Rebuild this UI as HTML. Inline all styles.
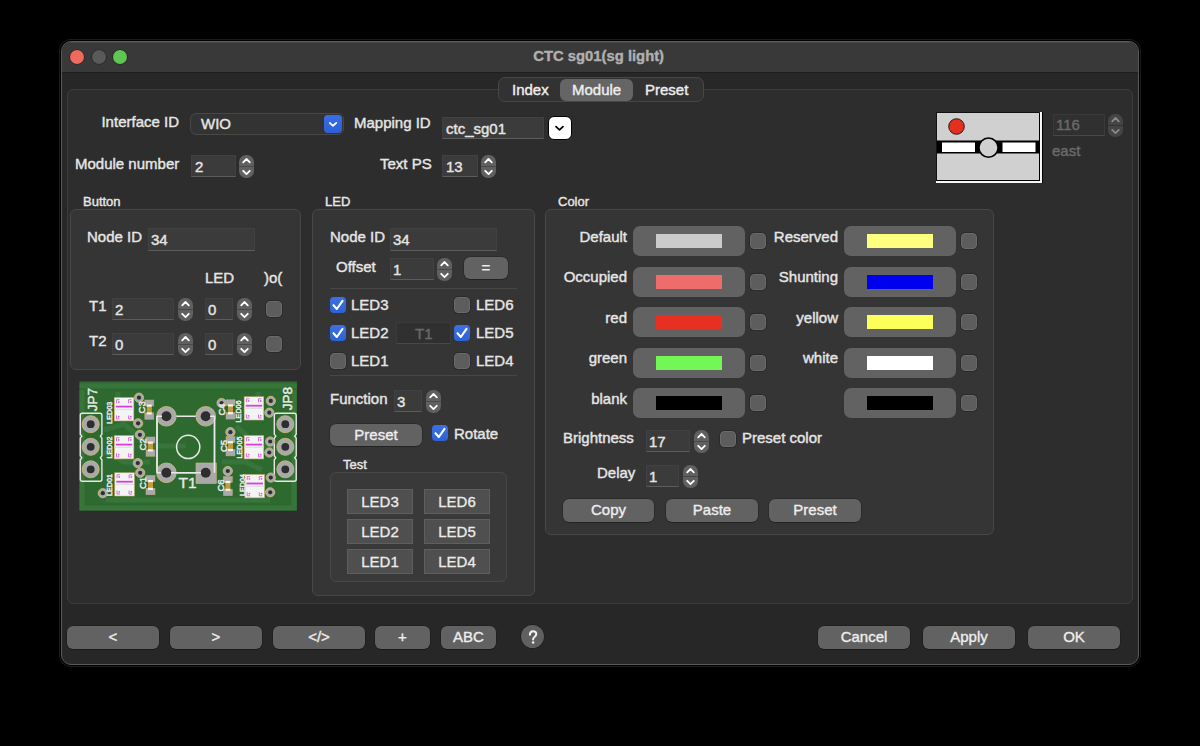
<!DOCTYPE html><html><head><meta charset="utf-8"><style>*{box-sizing:border-box;margin:0;padding:0}
html,body{width:1200px;height:746px;background:#000;overflow:hidden;font-family:"Liberation Sans",sans-serif;color:#e6e6e6;font-size:15px}
.a{position:absolute}
#win{position:absolute;left:61px;top:41px;width:1078px;height:624px;border-radius:10px;background:#272727;border:1px solid #5a5a5a;box-shadow:0 0 0 1px #000,0 0 0 2px #1c1c1c;overflow:hidden}
#tb{position:absolute;left:0;top:0;width:100%;height:31px;background:#393939;border-bottom:1px solid #1e1e1e;box-shadow:inset 0 1px 0 rgba(255,255,255,.07)}
.tl{position:absolute;top:8px;width:14px;height:14px;border-radius:50%;box-shadow:0 0 0 .6px rgba(0,0,0,.45)}
.t{position:absolute;white-space:nowrap;line-height:1;-webkit-text-stroke:0.4px currentColor}
.r{text-align:right}
.c{text-align:center}
.tab{position:absolute;left:67px;top:89px;width:1066px;height:515px;background:#2d2d2d;border:1px solid #3d3d3d;border-radius:6px}
.seg{background:#323232;border:1px solid #474747;border-radius:7px}
.box{position:absolute;background:#353535;border:1px solid #474747;border-radius:6px}
.tbox{background:#393939}
.fld{position:absolute;background:#3b3b3b;border:1px solid #414141;border-bottom:1.5px solid #5c5c5c}
.fld.dis{background:#303030;border:1px solid #3a3a3a;border-bottom:1px solid #484848}
.stp{position:absolute;width:15px;height:23px;background:#606060;border-radius:7px;overflow:hidden}
.stp svg{position:absolute;left:0;top:0}
.stp.dis{background:#454545}
.btn{position:absolute;background:#626262;border-radius:6px;color:#eeeeee;text-align:center;box-shadow:0 0 0 .5px rgba(0,0,0,.35),0 1px 0 rgba(0,0,0,.2);-webkit-text-stroke:0.35px currentColor}
.cb{position:absolute;width:16px;height:16px;border-radius:4px;background:#5d5d5d;border:1px solid #6a6a6a;box-shadow:0 0 0 .5px rgba(0,0,0,.4)}
.cbc{position:absolute;width:16px;height:16px;border-radius:4px;background:linear-gradient(#3c70e4,#2e61d4)}
.cbc svg{position:absolute;left:0;top:0}
.tbtn{position:absolute;background:#4f4f4f;border:1px solid #5e5e5e;color:#ececec;text-align:center;-webkit-text-stroke:0.3px currentColor}
.cbtn{position:absolute;width:112px;height:30px;background:#626262;border-radius:7px}
.sw{position:absolute;left:23px;top:8px;width:66px;height:14px}
.sep{position:absolute;height:1px;background:#474747}
.popup{background:#333;border:1px solid #474747;border-radius:6px}
.blue{background:linear-gradient(#3a6ee6,#2d5fd6);border-radius:4px}
.blue svg{position:absolute;left:0;top:0}
.help{border-radius:50%;background:#606060;box-shadow:0 0 0 .5px rgba(0,0,0,.4)}
</style></head><body>
<div id="win"><div id="tb"><div class="tl" style="left:8px;background:#ed6a5e;"></div><div class="tl" style="left:29.5px;background:#5a5a5a;"></div><div class="tl" style="left:51px;background:#61c554;"></div></div></div>
<div class="t c" style="left:448.70000000000005px;width:300px;top:49px;font-weight:bold;color:#b0b0b0;font-size:14.8px">CTC sg01(sg light)</div>
<div class="tab"></div>
<div class="a seg" style="left:498px;top:77px;width:206px;height:25px"></div>
<div class="a" style="left:560px;top:79px;width:73px;height:22px;background:#656565;border-radius:6px"></div>
<div class="t" style="left:512px;top:82px;color:#eee">Index</div>
<div class="t" style="left:572px;top:82px;color:#eee">Module</div>
<div class="t" style="left:645px;top:82px;color:#eee">Preset</div>
<div class="t r" style="left:-121px;width:300px;top:114px;">Interface ID</div>
<div class="a popup" style="left:190px;top:113px;width:154px;height:22px"></div>
<div class="a blue" style="left:324px;top:115px;width:18px;height:18px"><svg width="18" height="18" viewBox="0 0 18 18"><polyline points="5.8,7.9 9,10.8 12.2,7.9" fill="none" stroke="#fff" stroke-width="1.8" stroke-linecap="round" stroke-linejoin="round"/></svg></div>
<div class="t" style="left:201px;top:116px;">WIO</div>
<div class="t" style="left:354px;top:115px;">Mapping ID</div>
<div class="fld" style="left:442px;top:117px;width:102px;height:22px"></div>
<div class="t" style="left:446px;top:121px;">ctc_sg01</div>
<div class="a" style="left:548px;top:116px;width:24px;height:24px;background:#fff;border:1.5px solid #000;border-radius:6px"><svg width="21" height="21" viewBox="0 0 21 21" style="position:absolute;left:0;top:0"><polyline points="7,9.6 10.5,12.8 14,9.6" fill="none" stroke="#000" stroke-width="1.7" stroke-linecap="round" stroke-linejoin="round"/></svg></div>
<div class="t" style="left:75px;top:156px;">Module number</div>
<div class="fld" style="left:191px;top:155px;width:45px;height:22px"></div>
<div class="t" style="left:195px;top:159px;">2</div>
<div class="stp" style="left:239px;top:155px"><svg width="15" height="23" viewBox="0 0 15 23"><line x1="0" y1="11.5" x2="15" y2="11.5" stroke="rgba(0,0,0,.25)" stroke-width="1"/><polyline points="4.2,7.3 7.5,4 10.8,7.3" fill="none" stroke="#fff" stroke-width="1.8" stroke-linecap="round" stroke-linejoin="round"/><polyline points="4.2,15.8 7.5,19.1 10.8,15.8" fill="none" stroke="#fff" stroke-width="1.8" stroke-linecap="round" stroke-linejoin="round"/></svg></div>
<div class="t" style="left:380px;top:156px;">Text PS</div>
<div class="fld" style="left:442px;top:155px;width:36px;height:22px"></div>
<div class="t" style="left:446px;top:159px;">13</div>
<div class="stp" style="left:481px;top:155px"><svg width="15" height="23" viewBox="0 0 15 23"><line x1="0" y1="11.5" x2="15" y2="11.5" stroke="rgba(0,0,0,.25)" stroke-width="1"/><polyline points="4.2,7.3 7.5,4 10.8,7.3" fill="none" stroke="#fff" stroke-width="1.8" stroke-linecap="round" stroke-linejoin="round"/><polyline points="4.2,15.8 7.5,19.1 10.8,15.8" fill="none" stroke="#fff" stroke-width="1.8" stroke-linecap="round" stroke-linejoin="round"/></svg></div>
<div class="a" style="left:936px;top:112px;width:103px;height:69px;background:#d0d0d0;border-top:1px solid #111;border-left:1px solid #111;overflow:hidden"><svg width="103" height="68" viewBox="0 0 103 68" style="position:absolute;left:0;top:0"><rect x="0" y="27.5" width="103" height="13" fill="#000"/><rect x="5" y="29.5" width="33" height="9.5" fill="#fff"/><rect x="65.5" y="29.5" width="33" height="9.5" fill="#fff"/><circle cx="51.5" cy="34.6" r="9.6" fill="#d0d0d0" stroke="#000" stroke-width="1.6"/><circle cx="19.5" cy="13.5" r="7.8" fill="#e5301f" stroke="#000" stroke-width="0.8"/></svg></div>
<div class="a" style="left:1039px;top:113px;width:1px;height:68px;background:#000"></div>
<div class="a" style="left:937px;top:180px;width:103px;height:1px;background:#000"></div>
<div class="a" style="left:1040px;top:112px;width:2px;height:71px;background:#f6f6f6"></div>
<div class="a" style="left:936px;top:181px;width:106px;height:2px;background:#f6f6f6"></div>
<div class="a" style="left:1042px;top:112px;width:1px;height:71px;background:#000"></div>
<div class="fld dis" style="left:1053px;top:114px;width:52px;height:22px"></div>
<div class="t" style="left:1056px;top:116.5px;color:#6a6a6a">116</div>
<div class="stp dis" style="left:1108px;top:114px"><svg width="15" height="23" viewBox="0 0 15 23"><line x1="0" y1="11.5" x2="15" y2="11.5" stroke="rgba(0,0,0,.25)" stroke-width="1"/><polyline points="4.2,7.3 7.5,4 10.8,7.3" fill="none" stroke="#8a8a8a" stroke-width="1.8" stroke-linecap="round" stroke-linejoin="round"/><polyline points="4.2,15.8 7.5,19.1 10.8,15.8" fill="none" stroke="#8a8a8a" stroke-width="1.8" stroke-linecap="round" stroke-linejoin="round"/></svg></div>
<div class="t" style="left:1052px;top:143px;color:#6a6a6a">east</div>
<div class="t" style="left:83px;top:195px;font-size:13px;-webkit-text-stroke:0.4px currentColor">Button</div>
<div class="box" style="left:70px;top:209px;width:231px;height:161px"></div>
<div class="t" style="left:87px;top:229px;">Node ID</div>
<div class="fld" style="left:148px;top:228px;width:107px;height:23px"></div>
<div class="t" style="left:151px;top:232px;">34</div>
<div class="t" style="left:205px;top:270px;">LED</div>
<div class="t" style="left:264px;top:270px;">)o(</div>
<div class="t" style="left:89px;top:298px;">T1</div>
<div class="fld" style="left:112px;top:298px;width:62px;height:22px"></div>
<div class="t" style="left:115px;top:302px;">2</div>
<div class="stp" style="left:178px;top:298px"><svg width="15" height="23" viewBox="0 0 15 23"><line x1="0" y1="11.5" x2="15" y2="11.5" stroke="rgba(0,0,0,.25)" stroke-width="1"/><polyline points="4.2,7.3 7.5,4 10.8,7.3" fill="none" stroke="#fff" stroke-width="1.8" stroke-linecap="round" stroke-linejoin="round"/><polyline points="4.2,15.8 7.5,19.1 10.8,15.8" fill="none" stroke="#fff" stroke-width="1.8" stroke-linecap="round" stroke-linejoin="round"/></svg></div>
<div class="fld" style="left:205px;top:298px;width:28px;height:22px"></div>
<div class="t" style="left:208px;top:302px;">0</div>
<div class="stp" style="left:237px;top:298px"><svg width="15" height="23" viewBox="0 0 15 23"><line x1="0" y1="11.5" x2="15" y2="11.5" stroke="rgba(0,0,0,.25)" stroke-width="1"/><polyline points="4.2,7.3 7.5,4 10.8,7.3" fill="none" stroke="#fff" stroke-width="1.8" stroke-linecap="round" stroke-linejoin="round"/><polyline points="4.2,15.8 7.5,19.1 10.8,15.8" fill="none" stroke="#fff" stroke-width="1.8" stroke-linecap="round" stroke-linejoin="round"/></svg></div>
<div class="cb" style="left:266px;top:301px"></div>
<div class="t" style="left:89px;top:333px;">T2</div>
<div class="fld" style="left:112px;top:333px;width:62px;height:22px"></div>
<div class="t" style="left:115px;top:337px;">0</div>
<div class="stp" style="left:178px;top:333px"><svg width="15" height="23" viewBox="0 0 15 23"><line x1="0" y1="11.5" x2="15" y2="11.5" stroke="rgba(0,0,0,.25)" stroke-width="1"/><polyline points="4.2,7.3 7.5,4 10.8,7.3" fill="none" stroke="#fff" stroke-width="1.8" stroke-linecap="round" stroke-linejoin="round"/><polyline points="4.2,15.8 7.5,19.1 10.8,15.8" fill="none" stroke="#fff" stroke-width="1.8" stroke-linecap="round" stroke-linejoin="round"/></svg></div>
<div class="fld" style="left:205px;top:333px;width:28px;height:22px"></div>
<div class="t" style="left:208px;top:337px;">0</div>
<div class="stp" style="left:237px;top:333px"><svg width="15" height="23" viewBox="0 0 15 23"><line x1="0" y1="11.5" x2="15" y2="11.5" stroke="rgba(0,0,0,.25)" stroke-width="1"/><polyline points="4.2,7.3 7.5,4 10.8,7.3" fill="none" stroke="#fff" stroke-width="1.8" stroke-linecap="round" stroke-linejoin="round"/><polyline points="4.2,15.8 7.5,19.1 10.8,15.8" fill="none" stroke="#fff" stroke-width="1.8" stroke-linecap="round" stroke-linejoin="round"/></svg></div>
<div class="cb" style="left:266px;top:336px"></div>
<svg class="a" style="left:79px;top:381px" width="219" height="131" viewBox="79 381 219 131">
<rect x="79.5" y="381.5" width="217.5" height="129" fill="#2e6a2f"/>
<g fill="none" stroke="#37753a" stroke-width="5">
<path d="M79.5,386 H297"/>
<path d="M82,390 V508 H294 V390"/>
<path d="M118,392 V398 M258,392 V398"/>
<path d="M104,430 L124,424 L150,446 L186,446"/>
<path d="M104,452 L124,462 L150,462"/>
<path d="M236,426 L258,446 L274,446"/>
<path d="M222,462 L246,462 L262,470"/>
<path d="M106,500 H270"/>
</g>
<g fill="none" stroke="#2b642a" stroke-width="2.5">
<path d="M150,398 V418 M230,398 V418"/>
</g>
<path d="M82.3,413.2 H99.9 Q101.9,413.2 101.9,415.2 V434.2 L100.4,436.2 L101.9,438.2 V455.8 L100.4,457.8 L101.9,459.8 V479.2 Q101.9,481.2 99.9,481.2 H82.3 Q80.3,481.2 80.3,479.2 V459.8 L81.8,457.8 L80.3,455.8 V438.2 L81.8,436.2 L80.3,434.2 V415.2 Q80.3,413.2 82.3,413.2 Z" fill="none" stroke="#e8e8e8" stroke-width="1.4"/>
<path d="M276.3,413.2 H294.2 Q296.2,413.2 296.2,415.2 V434.2 L294.7,436.2 L296.2,438.2 V455.8 L294.7,457.8 L296.2,459.8 V479.2 Q296.2,481.2 294.2,481.2 H276.3 Q274.3,481.2 274.3,479.2 V459.8 L275.8,457.8 L274.3,455.8 V438.2 L275.8,436.2 L274.3,434.2 V415.2 Q274.3,413.2 276.3,413.2 Z" fill="none" stroke="#e8e8e8" stroke-width="1.4"/>
<circle cx="90.7" cy="424.2" r="8.5" fill="#a9a9a9" stroke="#c9b978" stroke-width="0.9"/>
<circle cx="90.7" cy="424.2" r="3.9" fill="#2e2e2e"/>
<circle cx="285.3" cy="424.2" r="8.5" fill="#a9a9a9" stroke="#c9b978" stroke-width="0.9"/>
<circle cx="285.3" cy="424.2" r="3.9" fill="#2e2e2e"/>
<circle cx="90.7" cy="446.8" r="8.5" fill="#a9a9a9" stroke="#c9b978" stroke-width="0.9"/>
<circle cx="90.7" cy="446.8" r="3.9" fill="#2e2e2e"/>
<circle cx="285.3" cy="446.8" r="8.5" fill="#a9a9a9" stroke="#c9b978" stroke-width="0.9"/>
<circle cx="285.3" cy="446.8" r="3.9" fill="#2e2e2e"/>
<circle cx="90.7" cy="469.3" r="8.5" fill="#a9a9a9" stroke="#c9b978" stroke-width="0.9"/>
<circle cx="90.7" cy="469.3" r="3.9" fill="#2e2e2e"/>
<circle cx="285.3" cy="469.3" r="8.5" fill="#a9a9a9" stroke="#c9b978" stroke-width="0.9"/>
<circle cx="285.3" cy="469.3" r="3.9" fill="#2e2e2e"/>
<circle cx="139" cy="397.7" r="4.6" fill="#a9a9a9" stroke="#c9b978" stroke-width="0.9"/>
<circle cx="139" cy="397.7" r="2.1" fill="#2e2e2e"/>
<circle cx="138.1" cy="423.3" r="4.6" fill="#a9a9a9" stroke="#c9b978" stroke-width="0.9"/>
<circle cx="138.1" cy="423.3" r="2.1" fill="#2e2e2e"/>
<circle cx="139.9" cy="434.8" r="4.6" fill="#a9a9a9" stroke="#c9b978" stroke-width="0.9"/>
<circle cx="139.9" cy="434.8" r="2.1" fill="#2e2e2e"/>
<circle cx="137.8" cy="463.1" r="4.6" fill="#a9a9a9" stroke="#c9b978" stroke-width="0.9"/>
<circle cx="137.8" cy="463.1" r="2.1" fill="#2e2e2e"/>
<circle cx="140.2" cy="472.8" r="4.6" fill="#a9a9a9" stroke="#c9b978" stroke-width="0.9"/>
<circle cx="140.2" cy="472.8" r="2.1" fill="#2e2e2e"/>
<circle cx="102.8" cy="493.2" r="4.6" fill="#a9a9a9" stroke="#c9b978" stroke-width="0.9"/>
<circle cx="102.8" cy="493.2" r="2.1" fill="#2e2e2e"/>
<circle cx="221.6" cy="403" r="4.6" fill="#a9a9a9" stroke="#c9b978" stroke-width="0.9"/>
<circle cx="221.6" cy="403" r="2.1" fill="#2e2e2e"/>
<circle cx="270.8" cy="400.9" r="4.6" fill="#a9a9a9" stroke="#c9b978" stroke-width="0.9"/>
<circle cx="270.8" cy="400.9" r="2.1" fill="#2e2e2e"/>
<circle cx="269.3" cy="412.7" r="4.6" fill="#a9a9a9" stroke="#c9b978" stroke-width="0.9"/>
<circle cx="269.3" cy="412.7" r="2.1" fill="#2e2e2e"/>
<circle cx="230.4" cy="432.2" r="4.6" fill="#a9a9a9" stroke="#c9b978" stroke-width="0.9"/>
<circle cx="230.4" cy="432.2" r="2.1" fill="#2e2e2e"/>
<circle cx="270.2" cy="441.5" r="4.6" fill="#a9a9a9" stroke="#c9b978" stroke-width="0.9"/>
<circle cx="270.2" cy="441.5" r="2.1" fill="#2e2e2e"/>
<circle cx="269.3" cy="452.5" r="4.6" fill="#a9a9a9" stroke="#c9b978" stroke-width="0.9"/>
<circle cx="269.3" cy="452.5" r="2.1" fill="#2e2e2e"/>
<circle cx="227.8" cy="471" r="4.6" fill="#a9a9a9" stroke="#c9b978" stroke-width="0.9"/>
<circle cx="227.8" cy="471" r="2.1" fill="#2e2e2e"/>
<circle cx="270.8" cy="477.6" r="4.6" fill="#a9a9a9" stroke="#c9b978" stroke-width="0.9"/>
<circle cx="270.8" cy="477.6" r="2.1" fill="#2e2e2e"/>
<circle cx="270.2" cy="492.3" r="4.6" fill="#a9a9a9" stroke="#c9b978" stroke-width="0.9"/>
<circle cx="270.2" cy="492.3" r="2.1" fill="#2e2e2e"/>
<rect x="114.3" y="397.7" width="19.5" height="23.2" fill="#f4f4f4" stroke="#c9b978" stroke-width="0.6"/>
<rect x="115.8" y="405.7" width="16.5" height="1.8" fill="#d83ee0"/>
<path d="M116.5,403.2 V399.7 H119.5" fill="none" stroke="#d85ee0" stroke-width="0.9"/>
<path d="M116.5,415.4 V418.9 H119.5" fill="none" stroke="#d85ee0" stroke-width="0.9"/>
<circle cx="118.7" cy="401.9" r="0.9" fill="#d85ee0"/>
<circle cx="118.7" cy="416.7" r="0.9" fill="#d85ee0"/>
<path d="M128.6,403.2 V399.7 H131.6" fill="none" stroke="#d85ee0" stroke-width="0.9"/>
<path d="M128.6,415.4 V418.9 H131.6" fill="none" stroke="#d85ee0" stroke-width="0.9"/>
<circle cx="130.79999999999998" cy="401.9" r="0.9" fill="#d85ee0"/>
<circle cx="130.79999999999998" cy="416.7" r="0.9" fill="#d85ee0"/>
<rect x="114.3" y="408.8" width="19.5" height="1" fill="#dddddd"/>
<rect x="114.3" y="435.7" width="19.5" height="23.2" fill="#f4f4f4" stroke="#c9b978" stroke-width="0.6"/>
<rect x="115.8" y="443.7" width="16.5" height="1.8" fill="#d83ee0"/>
<path d="M116.5,441.2 V437.7 H119.5" fill="none" stroke="#d85ee0" stroke-width="0.9"/>
<path d="M116.5,453.4 V456.9 H119.5" fill="none" stroke="#d85ee0" stroke-width="0.9"/>
<circle cx="118.7" cy="439.9" r="0.9" fill="#d85ee0"/>
<circle cx="118.7" cy="454.7" r="0.9" fill="#d85ee0"/>
<path d="M128.6,441.2 V437.7 H131.6" fill="none" stroke="#d85ee0" stroke-width="0.9"/>
<path d="M128.6,453.4 V456.9 H131.6" fill="none" stroke="#d85ee0" stroke-width="0.9"/>
<circle cx="130.79999999999998" cy="439.9" r="0.9" fill="#d85ee0"/>
<circle cx="130.79999999999998" cy="454.7" r="0.9" fill="#d85ee0"/>
<rect x="114.3" y="446.8" width="19.5" height="1" fill="#dddddd"/>
<rect x="114.8" y="472.8" width="19.5" height="23.2" fill="#f4f4f4" stroke="#c9b978" stroke-width="0.6"/>
<rect x="116.3" y="480.8" width="16.5" height="1.8" fill="#d83ee0"/>
<path d="M117.0,478.3 V474.8 H120.0" fill="none" stroke="#d85ee0" stroke-width="0.9"/>
<path d="M117.0,490.5 V494.0 H120.0" fill="none" stroke="#d85ee0" stroke-width="0.9"/>
<circle cx="119.2" cy="477.0" r="0.9" fill="#d85ee0"/>
<circle cx="119.2" cy="491.8" r="0.9" fill="#d85ee0"/>
<path d="M129.1,478.3 V474.8 H132.1" fill="none" stroke="#d85ee0" stroke-width="0.9"/>
<path d="M129.1,490.5 V494.0 H132.1" fill="none" stroke="#d85ee0" stroke-width="0.9"/>
<circle cx="131.29999999999998" cy="477.0" r="0.9" fill="#d85ee0"/>
<circle cx="131.29999999999998" cy="491.8" r="0.9" fill="#d85ee0"/>
<rect x="114.8" y="483.90000000000003" width="19.5" height="1" fill="#dddddd"/>
<rect x="244.2" y="396.8" width="19.5" height="23.2" fill="#f4f4f4" stroke="#c9b978" stroke-width="0.6"/>
<rect x="245.7" y="404.8" width="16.5" height="1.8" fill="#d83ee0"/>
<path d="M246.39999999999998,402.3 V398.8 H249.39999999999998" fill="none" stroke="#d85ee0" stroke-width="0.9"/>
<path d="M246.39999999999998,414.5 V418.0 H249.39999999999998" fill="none" stroke="#d85ee0" stroke-width="0.9"/>
<circle cx="248.59999999999997" cy="401.0" r="0.9" fill="#d85ee0"/>
<circle cx="248.59999999999997" cy="415.8" r="0.9" fill="#d85ee0"/>
<path d="M258.5,402.3 V398.8 H261.5" fill="none" stroke="#d85ee0" stroke-width="0.9"/>
<path d="M258.5,414.5 V418.0 H261.5" fill="none" stroke="#d85ee0" stroke-width="0.9"/>
<circle cx="260.7" cy="401.0" r="0.9" fill="#d85ee0"/>
<circle cx="260.7" cy="415.8" r="0.9" fill="#d85ee0"/>
<rect x="244.2" y="407.90000000000003" width="19.5" height="1" fill="#dddddd"/>
<rect x="244.2" y="435.7" width="19.5" height="23.2" fill="#f4f4f4" stroke="#c9b978" stroke-width="0.6"/>
<rect x="245.7" y="443.7" width="16.5" height="1.8" fill="#d83ee0"/>
<path d="M246.39999999999998,441.2 V437.7 H249.39999999999998" fill="none" stroke="#d85ee0" stroke-width="0.9"/>
<path d="M246.39999999999998,453.4 V456.9 H249.39999999999998" fill="none" stroke="#d85ee0" stroke-width="0.9"/>
<circle cx="248.59999999999997" cy="439.9" r="0.9" fill="#d85ee0"/>
<circle cx="248.59999999999997" cy="454.7" r="0.9" fill="#d85ee0"/>
<path d="M258.5,441.2 V437.7 H261.5" fill="none" stroke="#d85ee0" stroke-width="0.9"/>
<path d="M258.5,453.4 V456.9 H261.5" fill="none" stroke="#d85ee0" stroke-width="0.9"/>
<circle cx="260.7" cy="439.9" r="0.9" fill="#d85ee0"/>
<circle cx="260.7" cy="454.7" r="0.9" fill="#d85ee0"/>
<rect x="244.2" y="446.8" width="19.5" height="1" fill="#dddddd"/>
<rect x="245" y="474.6" width="19.5" height="23.2" fill="#f4f4f4" stroke="#c9b978" stroke-width="0.6"/>
<rect x="246.5" y="482.6" width="16.5" height="1.8" fill="#d83ee0"/>
<path d="M247.2,480.1 V476.6 H250.2" fill="none" stroke="#d85ee0" stroke-width="0.9"/>
<path d="M247.2,492.3 V495.8 H250.2" fill="none" stroke="#d85ee0" stroke-width="0.9"/>
<circle cx="249.39999999999998" cy="478.8" r="0.9" fill="#d85ee0"/>
<circle cx="249.39999999999998" cy="493.6" r="0.9" fill="#d85ee0"/>
<path d="M259.3,480.1 V476.6 H262.3" fill="none" stroke="#d85ee0" stroke-width="0.9"/>
<path d="M259.3,492.3 V495.8 H262.3" fill="none" stroke="#d85ee0" stroke-width="0.9"/>
<circle cx="261.5" cy="478.8" r="0.9" fill="#d85ee0"/>
<circle cx="261.5" cy="493.6" r="0.9" fill="#d85ee0"/>
<rect x="245" y="485.70000000000005" width="19.5" height="1" fill="#dddddd"/>
<rect x="144.8" y="400" width="9" height="6" fill="#a9a9a9" stroke="#b9ad7a" stroke-width="0.5"/>
<rect x="144.8" y="412.8" width="9" height="6.5" fill="#a9a9a9" stroke="#b9ad7a" stroke-width="0.5"/>
<rect x="146.8" y="405" width="5" height="9.3" fill="#c59a3a"/>
<rect x="146.8" y="404.5" width="5" height="2.2" fill="#f2f2f2"/>
<rect x="146.8" y="412.3" width="5" height="2.2" fill="#f2f2f2"/>
<rect x="146" y="437" width="9" height="6" fill="#a9a9a9" stroke="#b9ad7a" stroke-width="0.5"/>
<rect x="146" y="449.8" width="9" height="6.5" fill="#a9a9a9" stroke="#b9ad7a" stroke-width="0.5"/>
<rect x="148" y="442" width="5" height="9.3" fill="#c59a3a"/>
<rect x="148" y="441.5" width="5" height="2.2" fill="#f2f2f2"/>
<rect x="148" y="449.3" width="5" height="2.2" fill="#f2f2f2"/>
<rect x="146" y="475.5" width="9" height="6" fill="#a9a9a9" stroke="#b9ad7a" stroke-width="0.5"/>
<rect x="146" y="488.3" width="9" height="6.5" fill="#a9a9a9" stroke="#b9ad7a" stroke-width="0.5"/>
<rect x="148" y="480.5" width="5" height="9.3" fill="#c59a3a"/>
<rect x="148" y="480.0" width="5" height="2.2" fill="#f2f2f2"/>
<rect x="148" y="487.8" width="5" height="2.2" fill="#f2f2f2"/>
<rect x="226" y="399.8" width="9" height="6" fill="#a9a9a9" stroke="#b9ad7a" stroke-width="0.5"/>
<rect x="226" y="412.6" width="9" height="6.5" fill="#a9a9a9" stroke="#b9ad7a" stroke-width="0.5"/>
<rect x="228" y="404.8" width="5" height="9.3" fill="#c59a3a"/>
<rect x="228" y="404.3" width="5" height="2.2" fill="#f2f2f2"/>
<rect x="228" y="412.1" width="5" height="2.2" fill="#f2f2f2"/>
<rect x="226" y="436.6" width="9" height="6" fill="#a9a9a9" stroke="#b9ad7a" stroke-width="0.5"/>
<rect x="226" y="449.40000000000003" width="9" height="6.5" fill="#a9a9a9" stroke="#b9ad7a" stroke-width="0.5"/>
<rect x="228" y="441.6" width="5" height="9.3" fill="#c59a3a"/>
<rect x="228" y="441.1" width="5" height="2.2" fill="#f2f2f2"/>
<rect x="228" y="448.90000000000003" width="5" height="2.2" fill="#f2f2f2"/>
<rect x="223.4" y="476.4" width="9" height="6" fill="#a9a9a9" stroke="#b9ad7a" stroke-width="0.5"/>
<rect x="223.4" y="489.2" width="9" height="6.5" fill="#a9a9a9" stroke="#b9ad7a" stroke-width="0.5"/>
<rect x="225.4" y="481.4" width="5" height="9.3" fill="#c59a3a"/>
<rect x="225.4" y="480.9" width="5" height="2.2" fill="#f2f2f2"/>
<rect x="225.4" y="488.7" width="5" height="2.2" fill="#f2f2f2"/>
<path d="M157,416.3 V472.8 M166.4,416.3 H205.7 M214.5,416.3 V472.8 M166.4,472.8 H205.7" stroke="#e8e8e8" stroke-width="1.5" fill="none"/>
<path d="M157,416.3 H166 M206,416.3 H214.5 M157,472.8 H166 M206,472.8 H214.5" stroke="#e8e8e8" stroke-width="1.5" fill="none"/>
<circle cx="188.2" cy="446.9" r="11.6" fill="none" stroke="#e8e8e8" stroke-width="1.5"/>
<circle cx="166.4" cy="416.3" r="9.8" fill="#a9a9a9" stroke="#c9b978" stroke-width="0.9"/>
<circle cx="166.4" cy="416.3" r="5" fill="#2e2e2e"/>
<circle cx="205.7" cy="416.3" r="9.8" fill="#a9a9a9" stroke="#c9b978" stroke-width="0.9"/>
<circle cx="205.7" cy="416.3" r="5" fill="#2e2e2e"/>
<circle cx="166.4" cy="472.8" r="9.8" fill="#a9a9a9" stroke="#c9b978" stroke-width="0.9"/>
<circle cx="166.4" cy="472.8" r="5" fill="#2e2e2e"/>
<rect x="196" y="463" width="20.3" height="20.5" fill="#a9a9a9" stroke="#c9b978" stroke-width="0.6"/>
<circle cx="205.7" cy="472.8" r="5" fill="#2e2e2e"/>
<path d="M157,416.3 H162 M210,416.3 H214.5 M214.5,416.3 V472.8 M157,416.3 V472.8 M157,472.8 H161 M171,472.8 H201" stroke="#e8e8e8" stroke-width="1.5" fill="none"/>
<text x="92.6" y="399.5" transform="rotate(-90 92.6 399.5)" font-family="Liberation Sans" font-size="13.5" fill="#e8e8e8" stroke="#e8e8e8" stroke-width="0.45" text-anchor="middle" dominant-baseline="central" letter-spacing="0">JP7</text>
<text x="287.9" y="398.5" transform="rotate(-90 287.9 398.5)" font-family="Liberation Sans" font-size="13.5" fill="#e8e8e8" stroke="#e8e8e8" stroke-width="0.45" text-anchor="middle" dominant-baseline="central" letter-spacing="0">JP8</text>
<text x="109.4" y="412.7" transform="rotate(-90 109.4 412.7)" font-family="Liberation Sans" font-size="7.2" fill="#e8e8e8" stroke="#e8e8e8" stroke-width="0.45" text-anchor="middle" dominant-baseline="central" letter-spacing="0">LED03</text>
<text x="109.4" y="447.5" transform="rotate(-90 109.4 447.5)" font-family="Liberation Sans" font-size="7.2" fill="#e8e8e8" stroke="#e8e8e8" stroke-width="0.45" text-anchor="middle" dominant-baseline="central" letter-spacing="0">LED02</text>
<text x="109.4" y="485" transform="rotate(-90 109.4 485)" font-family="Liberation Sans" font-size="7.2" fill="#e8e8e8" stroke="#e8e8e8" stroke-width="0.45" text-anchor="middle" dominant-baseline="central" letter-spacing="0">LED01</text>
<text x="239" y="411.4" transform="rotate(-90 239 411.4)" font-family="Liberation Sans" font-size="7.2" fill="#e8e8e8" stroke="#e8e8e8" stroke-width="0.45" text-anchor="middle" dominant-baseline="central" letter-spacing="0">LED06</text>
<text x="239" y="447.5" transform="rotate(-90 239 447.5)" font-family="Liberation Sans" font-size="7.2" fill="#e8e8e8" stroke="#e8e8e8" stroke-width="0.45" text-anchor="middle" dominant-baseline="central" letter-spacing="0">LED05</text>
<text x="242" y="485" transform="rotate(-90 242 485)" font-family="Liberation Sans" font-size="7.2" fill="#e8e8e8" stroke="#e8e8e8" stroke-width="0.45" text-anchor="middle" dominant-baseline="central" letter-spacing="0">LED04</text>
<text x="142" y="407.4" transform="rotate(-90 142 407.4)" font-family="Liberation Sans" font-size="9.5" fill="#e8e8e8" stroke="#e8e8e8" stroke-width="0.45" text-anchor="middle" dominant-baseline="central" letter-spacing="0">C3</text>
<text x="142.5" y="444.5" transform="rotate(-90 142.5 444.5)" font-family="Liberation Sans" font-size="9.5" fill="#e8e8e8" stroke="#e8e8e8" stroke-width="0.45" text-anchor="middle" dominant-baseline="central" letter-spacing="0">C2</text>
<text x="142.5" y="483" transform="rotate(-90 142.5 483)" font-family="Liberation Sans" font-size="9.5" fill="#e8e8e8" stroke="#e8e8e8" stroke-width="0.45" text-anchor="middle" dominant-baseline="central" letter-spacing="0">C1</text>
<text x="221.6" y="409.5" transform="rotate(-90 221.6 409.5)" font-family="Liberation Sans" font-size="9.5" fill="#e8e8e8" stroke="#e8e8e8" stroke-width="0.45" text-anchor="middle" dominant-baseline="central" letter-spacing="0">C4</text>
<text x="223" y="446" transform="rotate(-90 223 446)" font-family="Liberation Sans" font-size="9.5" fill="#e8e8e8" stroke="#e8e8e8" stroke-width="0.45" text-anchor="middle" dominant-baseline="central" letter-spacing="0">C5</text>
<text x="220.3" y="485.5" transform="rotate(-90 220.3 485.5)" font-family="Liberation Sans" font-size="9.5" fill="#e8e8e8" stroke="#e8e8e8" stroke-width="0.45" text-anchor="middle" dominant-baseline="central" letter-spacing="0">C6</text>
<text x="187.5" y="482" font-family="Liberation Sans" font-size="15.5" fill="#e8e8e8" stroke="#e8e8e8" stroke-width="0.4" text-anchor="middle" dominant-baseline="central">T1</text>
</svg>
<div class="t" style="left:325px;top:195px;font-size:13px;-webkit-text-stroke:0.4px currentColor">LED</div>
<div class="box" style="left:312px;top:209px;width:223px;height:387px"></div>
<div class="t" style="left:330px;top:229px;">Node ID</div>
<div class="fld" style="left:390px;top:228px;width:107px;height:23px"></div>
<div class="t" style="left:393px;top:232px;">34</div>
<div class="t" style="left:336px;top:259px;">Offset</div>
<div class="fld" style="left:390px;top:258px;width:44px;height:22px"></div>
<div class="t" style="left:393px;top:262px;">1</div>
<div class="stp" style="left:437px;top:258px"><svg width="15" height="23" viewBox="0 0 15 23"><line x1="0" y1="11.5" x2="15" y2="11.5" stroke="rgba(0,0,0,.25)" stroke-width="1"/><polyline points="4.2,7.3 7.5,4 10.8,7.3" fill="none" stroke="#fff" stroke-width="1.8" stroke-linecap="round" stroke-linejoin="round"/><polyline points="4.2,15.8 7.5,19.1 10.8,15.8" fill="none" stroke="#fff" stroke-width="1.8" stroke-linecap="round" stroke-linejoin="round"/></svg></div>
<div class="btn" style="left:464px;top:257px;width:44px;height:22px;line-height:22px;">=</div>
<div class="sep" style="left:330px;top:288px;width:187px"></div>
<div class="cbc" style="left:330px;top:297px"><svg width="16" height="16" viewBox="0 0 16 16"><polyline points="3.5,8.2 6.8,12 12.5,3.8" fill="none" stroke="#fff" stroke-width="2.1" stroke-linecap="round" stroke-linejoin="round"/></svg></div>
<div class="t" style="left:351px;top:296.5px;">LED3</div>
<div class="cb" style="left:454px;top:297px"></div>
<div class="t" style="left:476px;top:296.5px;">LED6</div>
<div class="cbc" style="left:330px;top:325px"><svg width="16" height="16" viewBox="0 0 16 16"><polyline points="3.5,8.2 6.8,12 12.5,3.8" fill="none" stroke="#fff" stroke-width="2.1" stroke-linecap="round" stroke-linejoin="round"/></svg></div>
<div class="t" style="left:351px;top:324.5px;">LED2</div>
<div class="cbc" style="left:454px;top:325px"><svg width="16" height="16" viewBox="0 0 16 16"><polyline points="3.5,8.2 6.8,12 12.5,3.8" fill="none" stroke="#fff" stroke-width="2.1" stroke-linecap="round" stroke-linejoin="round"/></svg></div>
<div class="t" style="left:476px;top:324.5px;">LED5</div>
<div class="cb" style="left:330px;top:353px"></div>
<div class="t" style="left:351px;top:352.5px;">LED1</div>
<div class="cb" style="left:454px;top:353px"></div>
<div class="t" style="left:476px;top:352.5px;">LED4</div>
<div class="fld dis" style="left:396px;top:322px;width:55px;height:22px"></div>
<div class="t" style="left:415px;top:325.5px;color:#6a6a6a">T1</div>
<div class="sep" style="left:330px;top:375px;width:187px"></div>
<div class="t" style="left:330px;top:391px;">Function</div>
<div class="fld" style="left:394px;top:390px;width:28px;height:22px"></div>
<div class="t" style="left:397px;top:394px;">3</div>
<div class="stp" style="left:426px;top:390px"><svg width="15" height="23" viewBox="0 0 15 23"><line x1="0" y1="11.5" x2="15" y2="11.5" stroke="rgba(0,0,0,.25)" stroke-width="1"/><polyline points="4.2,7.3 7.5,4 10.8,7.3" fill="none" stroke="#fff" stroke-width="1.8" stroke-linecap="round" stroke-linejoin="round"/><polyline points="4.2,15.8 7.5,19.1 10.8,15.8" fill="none" stroke="#fff" stroke-width="1.8" stroke-linecap="round" stroke-linejoin="round"/></svg></div>
<div class="btn" style="left:330px;top:424px;width:92px;height:22px;line-height:22px;">Preset</div>
<div class="cbc" style="left:432px;top:425px"><svg width="16" height="16" viewBox="0 0 16 16"><polyline points="3.5,8.2 6.8,12 12.5,3.8" fill="none" stroke="#fff" stroke-width="2.1" stroke-linecap="round" stroke-linejoin="round"/></svg></div>
<div class="t" style="left:454px;top:426px;">Rotate</div>
<div class="t" style="left:343px;top:458px;font-size:13px;-webkit-text-stroke:0.4px currentColor">Test</div>
<div class="box tbox" style="left:330px;top:472px;width:177px;height:110px"></div>
<div class="tbtn" style="left:347px;top:489px;width:66px;height:25px;line-height:24px">LED3</div>
<div class="tbtn" style="left:424px;top:489px;width:66px;height:25px;line-height:24px">LED6</div>
<div class="tbtn" style="left:347px;top:519px;width:66px;height:25px;line-height:24px">LED2</div>
<div class="tbtn" style="left:424px;top:519px;width:66px;height:25px;line-height:24px">LED5</div>
<div class="tbtn" style="left:347px;top:549px;width:66px;height:25px;line-height:24px">LED1</div>
<div class="tbtn" style="left:424px;top:549px;width:66px;height:25px;line-height:24px">LED4</div>
<div class="t" style="left:558px;top:195px;font-size:13px;-webkit-text-stroke:0.4px currentColor">Color</div>
<div class="box" style="left:545px;top:209px;width:449px;height:326px"></div>
<div class="t r" style="left:327px;width:300px;top:229px;">Default</div>
<div class="cbtn" style="left:633px;top:226px"><div class="sw" style="background:#cbcbcb"></div></div>
<div class="cb" style="left:750px;top:233px"></div>
<div class="t r" style="left:538px;width:300px;top:229px;">Reserved</div>
<div class="cbtn" style="left:844px;top:226px"><div class="sw" style="background:#fefe7f"></div></div>
<div class="cb" style="left:961px;top:233px"></div>
<div class="t r" style="left:327px;width:300px;top:269px;">Occupied</div>
<div class="cbtn" style="left:633px;top:267px"><div class="sw" style="background:#ec6d6a"></div></div>
<div class="cb" style="left:750px;top:274px"></div>
<div class="t r" style="left:538px;width:300px;top:269px;">Shunting</div>
<div class="cbtn" style="left:844px;top:267px"><div class="sw" style="background:#0000f0"></div></div>
<div class="cb" style="left:961px;top:274px"></div>
<div class="t r" style="left:327px;width:300px;top:310px;">red</div>
<div class="cbtn" style="left:633px;top:307px"><div class="sw" style="background:#e73022"></div></div>
<div class="cb" style="left:750px;top:314px"></div>
<div class="t r" style="left:538px;width:300px;top:310px;">yellow</div>
<div class="cbtn" style="left:844px;top:307px"><div class="sw" style="background:#fefe5a"></div></div>
<div class="cb" style="left:961px;top:314px"></div>
<div class="t r" style="left:327px;width:300px;top:350px;">green</div>
<div class="cbtn" style="left:633px;top:348px"><div class="sw" style="background:#73f757"></div></div>
<div class="cb" style="left:750px;top:355px"></div>
<div class="t r" style="left:538px;width:300px;top:350px;">white</div>
<div class="cbtn" style="left:844px;top:348px"><div class="sw" style="background:#ffffff"></div></div>
<div class="cb" style="left:961px;top:355px"></div>
<div class="t r" style="left:327px;width:300px;top:391px;">blank</div>
<div class="cbtn" style="left:633px;top:388px"><div class="sw" style="background:#000000"></div></div>
<div class="cb" style="left:750px;top:395px"></div>
<div class="cbtn" style="left:844px;top:388px"><div class="sw" style="background:#000000"></div></div>
<div class="cb" style="left:961px;top:395px"></div>
<div class="t" style="left:563px;top:430px;">Brightness</div>
<div class="fld" style="left:646px;top:430px;width:44px;height:22px"></div>
<div class="t" style="left:649px;top:434px;">17</div>
<div class="stp" style="left:694px;top:430px"><svg width="15" height="23" viewBox="0 0 15 23"><line x1="0" y1="11.5" x2="15" y2="11.5" stroke="rgba(0,0,0,.25)" stroke-width="1"/><polyline points="4.2,7.3 7.5,4 10.8,7.3" fill="none" stroke="#fff" stroke-width="1.8" stroke-linecap="round" stroke-linejoin="round"/><polyline points="4.2,15.8 7.5,19.1 10.8,15.8" fill="none" stroke="#fff" stroke-width="1.8" stroke-linecap="round" stroke-linejoin="round"/></svg></div>
<div class="cb" style="left:720px;top:431px"></div>
<div class="t" style="left:742px;top:430px;">Preset color</div>
<div class="t" style="left:597px;top:465px;">Delay</div>
<div class="fld" style="left:646px;top:465px;width:33px;height:22px"></div>
<div class="t" style="left:649px;top:469px;">1</div>
<div class="stp" style="left:683px;top:465px"><svg width="15" height="23" viewBox="0 0 15 23"><line x1="0" y1="11.5" x2="15" y2="11.5" stroke="rgba(0,0,0,.25)" stroke-width="1"/><polyline points="4.2,7.3 7.5,4 10.8,7.3" fill="none" stroke="#fff" stroke-width="1.8" stroke-linecap="round" stroke-linejoin="round"/><polyline points="4.2,15.8 7.5,19.1 10.8,15.8" fill="none" stroke="#fff" stroke-width="1.8" stroke-linecap="round" stroke-linejoin="round"/></svg></div>
<div class="btn" style="left:563px;top:499px;width:91px;height:23px;line-height:21px;">Copy</div>
<div class="btn" style="left:666px;top:499px;width:92px;height:23px;line-height:21px;">Paste</div>
<div class="btn" style="left:769px;top:499px;width:92px;height:23px;line-height:21px;">Preset</div>
<div class="btn" style="left:67px;top:626px;width:92px;height:23px;line-height:21px;">&lt;</div>
<div class="btn" style="left:170px;top:626px;width:92px;height:23px;line-height:21px;">&gt;</div>
<div class="btn" style="left:273px;top:626px;width:92px;height:23px;line-height:21px;">&lt;/&gt;</div>
<div class="btn" style="left:375px;top:626px;width:55px;height:23px;line-height:21px;">+</div>
<div class="btn" style="left:441px;top:626px;width:55px;height:23px;line-height:21px;">ABC</div>
<div class="btn" style="left:818px;top:626px;width:92px;height:23px;line-height:21px;">Cancel</div>
<div class="btn" style="left:923px;top:626px;width:92px;height:23px;line-height:21px;">Apply</div>
<div class="btn" style="left:1028px;top:626px;width:92px;height:23px;line-height:21px;">OK</div>
<div class="a help" style="left:521px;top:625px;width:23px;height:23px"><svg width="23" height="23" viewBox="0 0 23 23" style="position:absolute;left:0;top:0"><path transform="translate(0.6,0.3)" d="M8.3,9.4 C8.3,7 9.8,5.9 11.5,5.9 C13.3,5.9 14.7,7.1 14.7,8.8 C14.7,10.3 13.8,11 12.8,11.7 C11.9,12.3 11.5,12.9 11.5,14.2" fill="none" stroke="#f2f2f2" stroke-width="2" stroke-linecap="round"/><circle cx="12.1" cy="17.6" r="1.25" fill="#f2f2f2"/></svg></div>
</body></html>
